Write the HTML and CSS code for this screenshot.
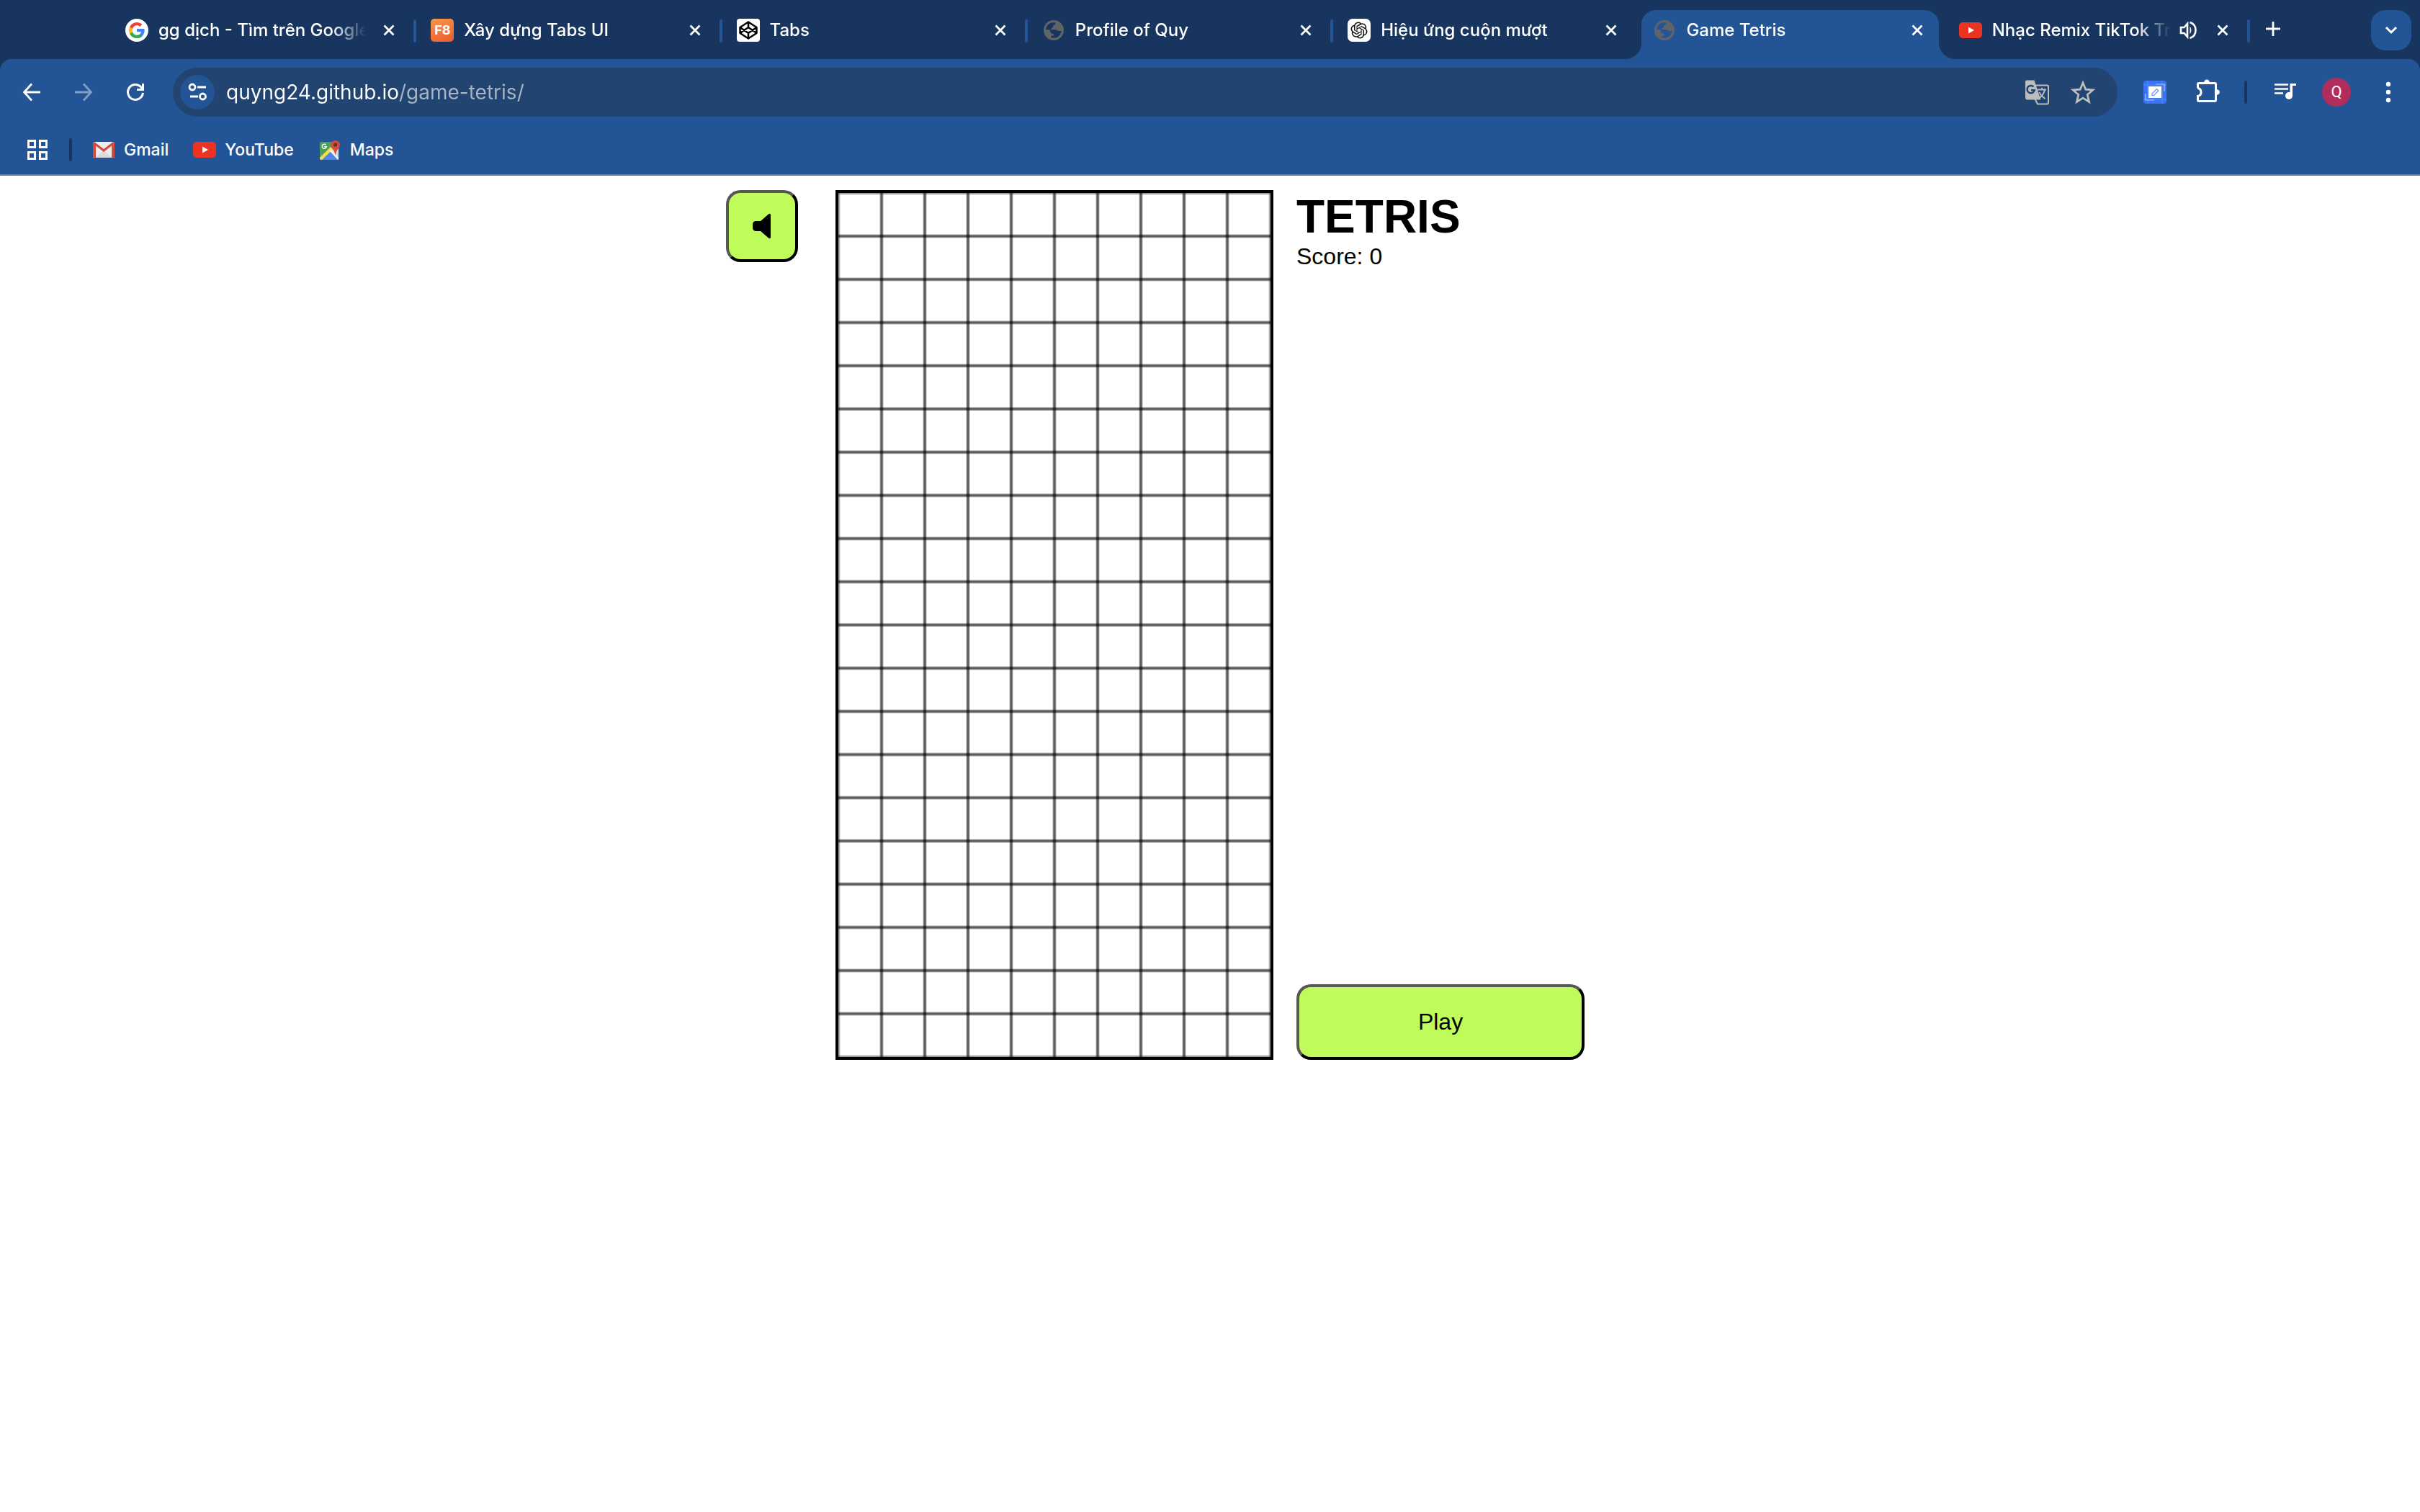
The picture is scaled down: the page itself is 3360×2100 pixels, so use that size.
FILE: index.html
```html
<!DOCTYPE html>
<html lang="vi">
<head>
<meta charset="utf-8">
<title>Game Tetris</title>
<link rel="stylesheet" href="styles.css">
</head>
<body>
<svg class="sprite" aria-hidden="true">
  <symbol id="close" viewBox="0 0 16 16"><path d="M1.5 1.5l13 13M14.5 1.5l-13 13" stroke="currentColor" stroke-width="2.8" fill="none"/></symbol>
  <symbol id="globe" viewBox="-2 -2 32 32"><path fill="#5f6469" fill-rule="evenodd" d="M14 0a14 14 0 1 0 0 28 14 14 0 0 0 0-28zM3.2 13.2C3.4 7.6 8 3.4 13.2 3.2L16.5 3.6C16.5 6.5 15 6.8 13.2 7V9.500C13 11 11 10.800 10.500 11.500V13.200H17C19 13.500 18.500 15 21 15H24.700C24 20 20 24.600 14 24.800L10.500 24.200V21.500H14V19C10.500 19 9 17.500 9 13.200Z"/></symbol>
  <symbol id="youtube" viewBox="0 0 32 32"><rect y="5" width="32" height="22" rx="5" fill="#ea3323"/><path d="M13 11.500l8 4.500-8 4.500z" fill="#fff"/></symbol>
</svg>
<header class="browser">
  <div class="strip">
    <div class="tabs" role="tablist">
      <div class="tab" role="tab">
        <svg class="icon" viewBox="0 0 32 32"><circle cx="16" cy="16" r="16" fill="#fff"/><g transform="translate(5 5) scale(.92)"><path fill="#4285f4" d="M23.500 12.270c0-.85-.08-1.670-.22-2.450H12v4.640h6.450a5.520 5.520 0 0 1-2.390 3.620v3h3.870c2.260-2.090 3.570-5.160 3.570-8.810z"/><path fill="#34a853" d="M12 24c3.240 0 5.950-1.080 7.930-2.910l-3.870-3c-1.080.72-2.450 1.150-4.060 1.150-3.130 0-5.780-2.110-6.730-4.960H1.280v3.100A12 12 0 0 0 12 24z"/><path fill="#fbbc05" d="M5.270 14.290a7.200 7.200 0 0 1 0-4.580v-3.100H1.280a12 12 0 0 0 0 10.780z"/><path fill="#ea4335" d="M12 4.750c1.770 0 3.350.61 4.600 1.800l3.430-3.430A12 12 0 0 0 1.280 6.610l3.990 3.100C6.220 6.860 8.870 4.750 12 4.750z"/></g></svg>
        <span class="title">gg dịch - Tìm trên Google</span>
        <button class="close" aria-label="Đóng"><svg><use href="#close"/></svg></button>
      </div>
      <div class="tab" role="tab">
        <span class="icon f8">F8</span>
        <span class="title">Xây dựng Tabs UI</span>
        <button class="close" aria-label="Đóng"><svg><use href="#close"/></svg></button>
      </div>
      <div class="tab" role="tab">
        <svg class="icon" viewBox="0 0 32 32"><rect width="32" height="32" rx="4" fill="#fff"/><path d="M16 4.500l11.500 7.500v8L16 27.500 4.500 20v-8zM16 4.500V12M16 20v7.500M4.500 12L16 20l11.500-8M4.500 20L16 12l11.500 8" fill="none" stroke="#000" stroke-width="2.500" stroke-linejoin="round"/></svg>
        <span class="title">Tabs</span>
        <button class="close" aria-label="Đóng"><svg><use href="#close"/></svg></button>
      </div>
      <div class="tab" role="tab">
        <svg class="icon"><use href="#globe"/></svg>
        <span class="title">Profile of Quy</span>
        <button class="close" aria-label="Đóng"><svg><use href="#close"/></svg></button>
      </div>
      <div class="tab plain" role="tab">
        <svg class="icon" viewBox="0 0 32 32"><rect width="32" height="32" rx="7" fill="#fff"/><path transform="translate(4.500 4.500) scale(.96)" fill="#111" d="M22.2819 9.8211a5.9847 5.9847 0 0 0-.5157-4.9108 6.0462 6.0462 0 0 0-6.5098-2.9A6.0651 6.0651 0 0 0 4.9807 4.1818a5.9847 5.9847 0 0 0-3.9977 2.9 6.0462 6.0462 0 0 0 .7427 7.0966 5.98 5.98 0 0 0 .511 4.9107 6.051 6.051 0 0 0 6.5146 2.9001A5.9847 5.9847 0 0 0 13.2599 24a6.0557 6.0557 0 0 0 5.7718-4.2058 5.9894 5.9894 0 0 0 3.9977-2.9001 6.0557 6.0557 0 0 0-.7475-7.0729zm-9.022 12.6081a4.4755 4.4755 0 0 1-2.8764-1.0408l.1419-.0804 4.7783-2.7582a.7948.7948 0 0 0 .3927-.6813v-6.7369l2.02 1.1686a.071.071 0 0 1 .038.052v5.5826a4.504 4.504 0 0 1-4.4945 4.4944zm-9.6607-4.1254a4.4708 4.4708 0 0 1-.5346-3.0137l.142.0852 4.783 2.7582a.7712.7712 0 0 0 .7806 0l5.8428-3.3685v2.3324a.0804.0804 0 0 1-.0332.0615L9.74 19.9502a4.4992 4.4992 0 0 1-6.1408-1.6464zM2.3408 7.8956a4.485 4.485 0 0 1 2.3655-1.9728V11.6a.7664.7664 0 0 0 .3879.6765l5.8144 3.3543-2.0201 1.1685a.0757.0757 0 0 1-.071 0l-4.8303-2.7865A4.504 4.504 0 0 1 2.3408 7.872zm16.5963 3.8558L13.1038 8.364 15.1192 7.2a.0757.0757 0 0 1 .071 0l4.8303 2.7913a4.4944 4.4944 0 0 1-.6765 8.1042v-5.6772a.79.79 0 0 0-.407-.667zm2.0107-3.0231l-.142-.0852-4.7735-2.7818a.7759.7759 0 0 0-.7854 0L9.409 9.2297V6.8974a.0662.0662 0 0 1 .0284-.0615l4.8303-2.7866a4.4992 4.4992 0 0 1 6.6802 4.66zM8.3065 12.863l-2.02-1.1638a.0804.0804 0 0 1-.038-.0567V6.0742a4.4992 4.4992 0 0 1 7.3757-3.4537l-.142.0805L8.704 5.459a.7948.7948 0 0 0-.3927.6813zm1.0976-2.3654l2.602-1.4998 2.6069 1.4998v2.9994l-2.5974 1.4997-2.6067-1.4997Z"/></svg>
        <span class="title">Hiệu ứng cuộn mượt</span>
        <button class="close" aria-label="Đóng"><svg><use href="#close"/></svg></button>
      </div>
      <div class="tab plain active" role="tab" aria-selected="true">
        <svg class="icon"><use href="#globe"/></svg>
        <span class="title">Game Tetris</span>
        <button class="close" aria-label="Đóng"><svg><use href="#close"/></svg></button>
      </div>
      <div class="tab" role="tab">
        <svg class="icon"><use href="#youtube"/></svg>
        <span class="title">Nhạc Remix TikTok Tr</span>
        <button class="sound" aria-label="Tắt tiếng trang web"><svg viewBox="0 0 24 36"><path d="M2 14h4.500l4.500-5v18l-4.500-5H2z" fill="none" stroke="currentColor" stroke-width="2.600"/><path d="M14.500 12.500q4 5.500 0 11z" fill="currentColor"/><path d="M14.500 7q8 2.500 8 11t-8 11" fill="none" stroke="currentColor" stroke-width="2.600"/></svg></button>
        <button class="close" aria-label="Đóng"><svg><use href="#close"/></svg></button>
      </div>
    </div>
    <button class="new-tab" aria-label="Thẻ mới"><svg viewBox="0 0 20 20"><path d="M10 0v20M0 10h20" stroke="currentColor" stroke-width="2.800"/></svg></button>
    <button class="tab-search" aria-label="Tìm thẻ"><svg viewBox="0 0 18 12"><path d="M2 2l7 7 7-7" fill="none" stroke="currentColor" stroke-width="3"/></svg></button>
  </div>
  <div class="toolbar">
    <div class="nav">
      <button class="tool" aria-label="Quay lại"><svg viewBox="0 0 40 40"><path d="M32 20H10M20 8.500L9.500 20 20 31.500" fill="none" stroke="currentColor" stroke-width="2.800"/></svg></button>
      <button class="tool" aria-label="Tiến" disabled><svg viewBox="0 0 40 40"><path d="M8 20h22M20 8.500L30.500 20 20 31.500" fill="none" stroke="currentColor" stroke-width="2.800"/></svg></button>
      <button class="tool" aria-label="Tải lại"><svg viewBox="0 0 40 40"><path d="M30.500 21A10.500 10.500 0 1 1 27.500 12.500L30 15.500" fill="none" stroke="currentColor" stroke-width="3"/><path d="M32 8v10H22v-3h7V8z" fill="currentColor"/></svg></button>
      <div class="omnibox">
        <button class="site" aria-label="Thông tin trang web"><svg viewBox="0 0 28 26"><g fill="none" stroke="currentColor" stroke-width="2.800"><circle cx="7" cy="6" r="4"/><path d="M14 6h12M4 19h11"/><circle cx="21.500" cy="19" r="4"/></g></svg></button>
        <input class="url" type="text" aria-label="Địa chỉ" value="quyng24.github.io/game-tetris/">
        <button class="action" aria-label="Dịch trang"><svg viewBox="0 0 36 36"><path d="M13 8.500h19a2 2 0 0 1 2 2v22a2 2 0 0 1-2 2H19l-4-8" fill="none" stroke="currentColor" stroke-width="2"/><path d="M19 14.500h12M25 12v2.500M29 15q-2 8-9 12M21.500 18q2 5 8 9" fill="none" stroke="currentColor" stroke-width="2"/><path d="M3.500 1.500h11l9 27H5a3 3 0 0 1-3-3V3.500a2 2 0 0 1 1.500-2z" fill="currentColor"/><path d="M13.500 10.500a5.200 5.200 0 1 0 1.300 4.800H10" fill="none" stroke="#224470" stroke-width="2.500"/></svg></button>
        <button class="action" aria-label="Đánh dấu trang"><svg viewBox="0 0 36 36"><path d="M18 5l3.800 9.200 10 .8-7.600 6.500 2.400 9.900-8.600-5.300-8.600 5.300 2.400-9.900L4.200 15l10-.8z" fill="none" stroke="currentColor" stroke-width="2.800"/></svg></button>
      </div>
      <button class="tool" aria-label="Tiện ích"><svg viewBox="0 0 40 40"><rect x="4" y="4" width="32" height="32" rx="4" fill="#3b73f5"/><path d="M4 10h32M4 30h32M10 4v32M30 4v32" stroke="#5a8bf8" stroke-width="1"/><path d="M21 9h12v10M7 22v9h12" fill="none" stroke="#a9c3fb" stroke-width="1.200"/><rect x="11" y="12" width="18" height="16" fill="#fff"/><path d="M16 22l6.500-6.500 2.500 2.500-6.500 6.500h-2.500z" fill="none" stroke="#6690f5" stroke-width="1.200"/></svg></button>
      <button class="tool" aria-label="Tiện ích mở rộng"><svg viewBox="0 0 40 40"><path d="M7.500 14.500V9Q7.500 7.500 9 7.500H31Q32.500 7.500 32.500 9V31Q32.500 32.500 31 32.500H9Q7.500 32.500 7.500 31V25.500A5.600 5.600 0 0 0 7.500 14.500" fill="none" stroke="currentColor" stroke-width="3"/><path d="M16 7a4 4.500 0 0 1 8 0zM33 16a5 4 0 0 1 0 8z" fill="currentColor"/></svg></button>
      <span class="divider"></span>
      <button class="tool" aria-label="Điều khiển nội dung"><svg viewBox="0 0 40 40"><path d="M6 9.500h19M6 15.500h19M6 21.500h12" stroke="currentColor" stroke-width="2.500"/><path d="M27.500 8h8.500v3h-5v14h-3.500z" fill="currentColor"/><circle cx="26" cy="25" r="5" fill="currentColor"/></svg></button>
      <button class="tool" aria-label="Hồ sơ"><span class="avatar">Q</span></button>
      <button class="tool" aria-label="Trình đơn"><svg viewBox="0 0 40 40" fill="currentColor"><circle cx="20" cy="9" r="3.200"/><circle cx="20" cy="20" r="3.200"/><circle cx="20" cy="31" r="3.200"/></svg></button>
    </div>
    <nav class="bookmarks">
      <button class="apps" aria-label="Ứng dụng"><svg viewBox="0 0 28 28"><path d="M1.500 1.500h9v9h-9zM17.500 1.500h9v9h-9zM1.500 17.500h9v9h-9zM17.500 17.500h9v9h-9z" fill="none" stroke="currentColor" stroke-width="3"/></svg></button>
      <span class="divider"></span>
      <a class="bookmark" href="#gmail"><svg class="icon" viewBox="0 0 32 32"><rect x="1" y="5" width="30" height="22" rx="2" fill="#eeeeee"/><path d="M4 27l12-10 12 10z" fill="#dcdcdc"/><path d="M1 7a2 2 0 0 1 2-2l13 10L29 5a2 2 0 0 1 2 2v18a2 2 0 0 1-2 2h-2V10.500L16 19 5 10.500V27H3a2 2 0 0 1-2-2z" fill="#d54c3f"/></svg><span>Gmail</span></a>
      <a class="bookmark" href="#youtube"><svg class="icon"><use href="#youtube"/></svg><span>YouTube</span></a>
      <a class="bookmark" href="#maps"><svg class="icon" viewBox="0 0 32 32"><rect x="2" y="5" width="26" height="25" rx="2" fill="#4a9f60"/><path d="M28 14v14L17 17z" fill="#d8d8d8"/><path d="M2 27L17 12l4 4L6 30H4q-2 0-2-2z" fill="#fbdc4d"/><path d="M5 30l11.500-11L27 30z" fill="#4a86ee"/><path d="M15 17l2-2 11 11v3l-1 1z" fill="#f2f2f2"/><path d="M10.500 9.300a3 3 0 1 0 .7 2.500H8.500" fill="none" stroke="#fff" stroke-width="1.400"/><path d="M23.500 24q-1-7-4-10-2.500-3-2-6a6.500 6.500 0 0 1 12.500 0q.5 3-2 6-3 3-4.500 10z" fill="#d54c3f"/><circle cx="23.700" cy="9" r="2.600" fill="#702a24"/></svg><span>Maps</span></a>
    </nav>
  </div>
</header>
<main class="game">
  <button class="btn mute" aria-label="Âm thanh"><svg viewBox="0 0 28 38"><path d="M6 12h6L23 2.500q3-2 3 1v31q0 3-3 1L12 26H6q-5 0-5-5v-4q0-5 5-5z"/></svg></button>
  <canvas class="board" id="board" width="300" height="600"></canvas>
  <section class="side">
    <div>
      <h1>TETRIS</h1>
      <p>Score: <span>0</span></p>
    </div>
    <button class="btn play">Play</button>
  </section>
</main>
<script src="script.js"></script>
</body>
</html>
```
FILE: styles.css
```css
:root {
  --strip: #17355e;
  --bar: #235596;
  --field: #224470;
  --lime: #bffc5a;
}

* { box-sizing: border-box; }

body {
  margin: 0;
  background: #fff;
  color: #000;
  font-family: "Liberation Sans", Arial, sans-serif;
}

button {
  padding: 0;
  border: 0;
  background: none;
  color: inherit;
  font: inherit;
}

.sprite { display: none; }

.icon {
  flex: none;
  width: 32px;
  height: 32px;
}

/* Browser frame */
.browser {
  background: var(--strip);
  color: #fff;
  font: 500 24px/32px Inter, sans-serif;
}

.strip {
  display: flex;
  height: 82px;
  padding: 0 12px 0 154px;
}

.tabs {
  display: flex;
  flex: 1;
  min-width: 0;
}

.tab {
  position: relative;
  display: flex;
  flex: 1;
  align-items: center;
  min-width: 0;
  height: 84px;
  padding: 0 18px 0 20px;
}

.tab::after {
  content: "";
  position: absolute;
  top: 27px;
  right: 0;
  width: 4px;
  height: 32px;
  border-radius: 2px;
  background: var(--bar);
}

.tab.plain::after { display: none; }

.title {
  flex: 1;
  min-width: 0;
  margin: 0 12px 0 14px;
  overflow: hidden;
  white-space: nowrap;
  mask-image: linear-gradient(to left, transparent, #000 48px);
}

.close {
  display: grid;
  place-items: center;
  flex: none;
  width: 40px;
  height: 40px;
}

.close svg { width: 16px; height: 16px; }

.sound {
  flex: none;
  width: 24px;
  height: 36px;
  margin-right: 16px;
}

.sound svg { display: block; }

.f8 {
  border-radius: 5px;
  background: linear-gradient(160deg, #f2994a, #ee5a30);
  font-size: 18px;
  font-weight: 700;
  text-align: center;
}

.active { isolation: isolate; }

.active::before {
  content: "";
  position: absolute;
  z-index: -1;
  inset: 14px 8px 2px 4px;
  border-radius: 20px 20px 0 0;
  background: var(--bar);
}

/* Flared feet on both sides of the selected tab */
.tab.active::after {
  display: block;
  z-index: -1;
  top: 58px;
  right: -16px;
  left: -20px;
  width: auto;
  height: 24px;
  border-radius: 0;
  background:
    radial-gradient(circle at 0 0, transparent 24px, var(--bar) 25px) left / 24px 24px no-repeat,
    radial-gradient(circle at 100% 0, transparent 24px, var(--bar) 25px) right / 24px 24px no-repeat;
}

.new-tab {
  display: grid;
  place-items: center;
  width: 64px;
  height: 80px;
  margin-right: 104px;
}

.new-tab svg { width: 20px; height: 20px; }

.tab-search {
  display: grid;
  place-items: center;
  width: 56px;
  height: 56px;
  margin-top: 14px;
  border-radius: 20px;
  background: var(--bar);
}

.tab-search svg { width: 18px; height: 12px; }

.toolbar {
  border-bottom: 2px solid #4f7bb0;
  border-radius: 16px 16px 0 0;
  background: var(--bar);
}

.nav {
  display: flex;
  align-items: center;
  height: 92px;
  padding: 0 8px;
}

.tool {
  display: grid;
  place-items: center;
  flex: none;
  width: 72px;
  height: 72px;
}

.tool svg { width: 40px; height: 40px; }

.tool:disabled { color: #849fc5; }

.omnibox {
  display: flex;
  flex: 1;
  align-items: center;
  min-width: 0;
  height: 68px;
  margin: 0 16px;
  padding: 0 16px 0 10px;
  border-radius: 34px;
  background: var(--field);
}

.site {
  display: grid;
  place-items: center;
  width: 48px;
  height: 48px;
  border-radius: 50%;
  background: var(--bar);
}

.site svg { width: 28px; height: 26px; }

.url {
  flex: 1;
  min-width: 0;
  height: 48px;
  margin-left: 16px;
  padding: 0;
  border: 0;
  outline: 0;
  background: linear-gradient(to right, #fff 240px, #a7b4c6 240px) text;
  color: transparent;
  font: 400 28px/48px Inter, sans-serif;
}

.action {
  display: grid;
  place-items: center;
  width: 64px;
  height: 48px;
  color: #bdbdbd;
}

.action svg { width: 36px; height: 36px; }

.divider {
  flex: none;
  width: 4px;
  height: 32px;
  margin: 0 16px;
  border-radius: 2px;
  background: var(--strip);
}

.avatar {
  width: 40px;
  height: 40px;
  border-radius: 50%;
  background: #b12d5b;
  font: 400 22px/40px Roboto, sans-serif;
  text-align: center;
}

.bookmarks {
  display: flex;
  align-items: center;
  height: 68px;
  padding-left: 24px;
  font-size: 23px;
}

.apps {
  display: grid;
  place-items: center;
  width: 56px;
  height: 56px;
}

.apps svg { width: 28px; height: 28px; }

.bookmark {
  display: flex;
  gap: 12px;
  margin: 0 22px 0 12px;
  color: inherit;
  text-decoration: none;
}

/* Game */
.game {
  display: grid;
  grid-template-columns: 1fr auto 400px 1fr;
  gap: 32px;
  padding-top: 20px;
  font-size: 32px;
}

.btn {
  border: 4px solid;
  border-color: #575757 #000 #000 #575757;
  border-radius: 20px;
  background: var(--lime);
  color: #000;
}

.mute {
  display: grid;
  place-items: center;
  justify-self: end;
  width: 100px;
  height: 100px;
  margin-right: 20px;
}

.mute svg { width: 28px; height: 38px; }

.board {
  width: 608px;
  border: 4px solid #000;
}

.side {
  display: flex;
  flex-direction: column;
  justify-content: space-between;
}

h1 {
  margin: 0;
  font-size: 64px;
  line-height: 74px;
}

p {
  margin: 0;
  line-height: 37px;
}

.play {
  padding: 30px;
  line-height: 37px;
}
```
FILE: script.js
```js
const CELL = 30;
const ROWS = 20;
const COLS = 10;
const ctx = document.getElementById("board").getContext("2d");

ctx.strokeStyle = "rgba(0, 0, 0, 0.8)";
for (let row = 0; row < ROWS; row++) {
  for (let col = 0; col < COLS; col++) {
    ctx.strokeRect(col * CELL, row * CELL, CELL, CELL);
  }
}
```
